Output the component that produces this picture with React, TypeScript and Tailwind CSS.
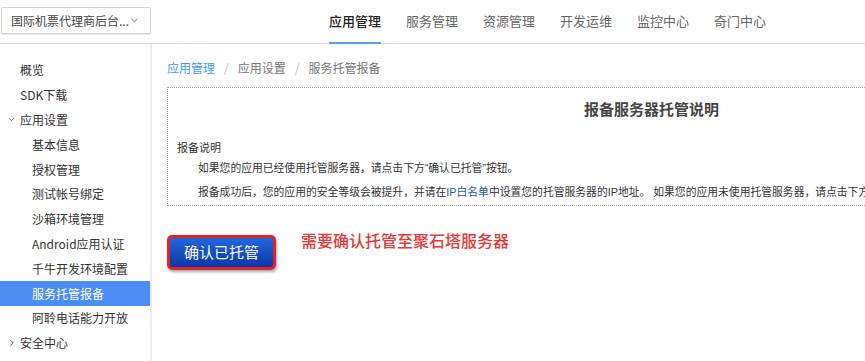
import { ChevronDown, ChevronRight } from "lucide-react";

const font = { fontFamily: '"Noto Sans CJK SC", "Noto Sans", sans-serif' };
const bodyFont = { fontFamily: '"Liberation Sans", "Noto Sans CJK SC", sans-serif' };

const tabs = ["应用管理", "服务管理", "资源管理", "开发运维", "监控中心", "奇门中心"];

type NavItem = { label: string; level: 0 | 1; arrow?: "down" | "right"; active?: boolean };

const nav: NavItem[] = [
  { label: "概览", level: 0 },
  { label: "SDK下载", level: 0 },
  { label: "应用设置", level: 0, arrow: "down" },
  { label: "基本信息", level: 1 },
  { label: "授权管理", level: 1 },
  { label: "测试帐号绑定", level: 1 },
  { label: "沙箱环境管理", level: 1 },
  { label: "Android应用认证", level: 1 },
  { label: "千牛开发环境配置", level: 1 },
  { label: "服务托管报备", level: 1, active: true },
  { label: "阿聆电话能力开放", level: 1 },
  { label: "安全中心", level: 0, arrow: "right" },
];

export default function App() {
  return (
    <div className="w-[865px] h-[361px] overflow-hidden bg-white flex flex-col text-[#333]" style={font}>
      {/* top bar */}
      <div className="h-[44px] shrink-0 flex items-stretch border-b border-[#dfe1e6] shadow-[0_1px_2px_rgba(0,0,0,0.04)]">
        <div className="ml-px mt-[7px] h-[27px] w-[150px] flex items-center justify-between pl-[9px] pr-[10px] border border-[#d4d4d4] rounded-[2px] shadow-[0_1px_1px_rgba(0,0,0,0.08)]">
          <span className="text-[12px] text-[#444] whitespace-nowrap">国际机票代理商后台...</span>
          <ChevronDown size={11} strokeWidth={2} className="text-[#666]" />
        </div>
        <div className="ml-[178px] flex gap-[25px]">
          {tabs.map((t, i) => (
            <div
              key={t}
              className={
                "flex items-center text-[13px] border-b-2 -mb-px " +
                (i === 0 ? "border-[#5b9df2] text-[#222] font-medium" : "border-transparent text-[#666]")
              }
            >
              {t}
            </div>
          ))}
        </div>
      </div>

      <div className="flex flex-1 min-h-0">
        {/* sidebar */}
        <div className="w-[152px] shrink-0 border-r-2 border-[#ececf1] pt-[14px]">
          {nav.map((n) => (
            <div
              key={n.label}
              className={
                "h-[24.8px] flex items-center text-[12px] " +
                (n.level === 0 ? "pl-[20px] " : "pl-[32px] ") +
                (n.active ? "bg-[#4b8df2] text-white" : "text-[#333]")
              }
            >
              {n.arrow === "down" && <ChevronDown size={9} strokeWidth={2} className="-ml-[13px] mr-[4px] text-[#555]" />}
              {n.arrow === "right" && <ChevronRight size={10} strokeWidth={2.2} className="-ml-[13px] mr-[3px] text-[#444]" />}
              {n.label}
            </div>
          ))}
        </div>

        {/* main */}
        <div className="flex-1 min-w-0 pl-[15px] pt-[16px] overflow-hidden">
          <div className="flex items-center gap-[9px] text-[12px] h-[16px] text-[#777]">
            <span className="text-[#3d9cf3]">应用管理</span>
            <span className="text-[#bbb]">/</span>
            <span>应用设置</span>
            <span className="text-[#bbb]">/</span>
            <span>服务托管报备</span>
          </div>

          <div className="mt-[11px] w-[960px] border border-dotted border-[#aaa] pt-[11px] pb-[1px] pl-[9px]">
            <div className="text-center text-[15px] font-bold text-[#444] leading-[20px]">报备服务器托管说明</div>
            <div className="mt-[20px] text-[11px] leading-[16px] text-[#333]">报备说明</div>
            <div className="pl-[21px] text-[10.8px] text-[#333] whitespace-nowrap" style={bodyFont}>
              <div className="leading-[24px] mt-[1px]">如果您的应用已经使用托管服务器，请点击下方“确认已托管”按钮。</div>
              <div className="leading-[24px]">
                报备成功后，您的应用的安全等级会被提升，并请在<span className="text-[#1d56b8]">IP白名单</span>
                中设置您的托管服务器的IP地址。 如果您的应用未使用托管服务器，请点击下方“取消托管”按钮。
              </div>
            </div>
          </div>

          <div className="mt-[29px] flex items-start">
            <button className="w-[109px] h-[35px] rounded-[5px] border-[3px] border-[#e02424] bg-gradient-to-b from-[#2467de] to-[#0937a8] text-white text-[15px] shadow-[1px_2px_3px_rgba(0,0,0,0.35)]">
              确认已托管
            </button>
            <div className="ml-[25px] -mt-[6px] text-[16px] font-medium text-[#e53935] leading-[22px]">需要确认托管至聚石塔服务器</div>
          </div>
        </div>
      </div>
    </div>
  );
}
